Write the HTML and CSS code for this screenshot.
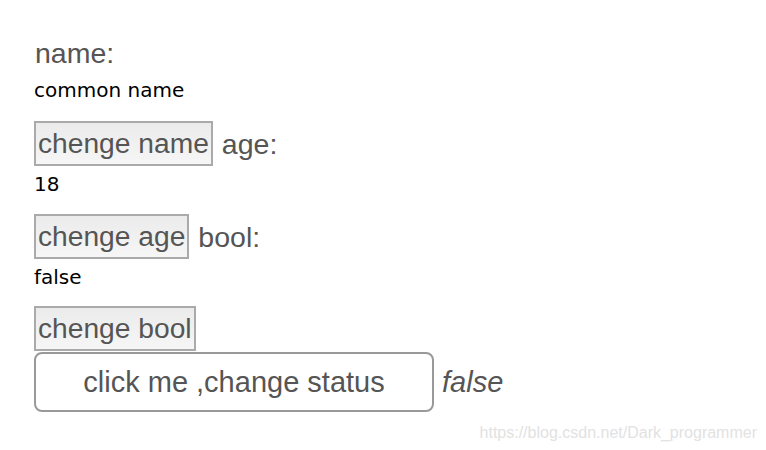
FILE: index.html
```html
<!DOCTYPE html>
<html>
<head>
<meta charset="utf-8">
<link rel="stylesheet" href="styles.css">
</head>
<body>
<div class="app">
  <div class="label">name:</div>
  <div class="value value-first">common name</div>
  <div class="row"><button class="btn">chenge name</button> <span class="label">age:</span></div>
  <div class="value">18</div>
  <div class="row"><button class="btn">chenge age</button> <span class="label">bool:</span></div>
  <div class="value value-last">false</div>
  <div class="row"><button class="btn">chenge bool</button></div>
  <div class="status-row">
    <button class="big-btn">click me ,change status</button>
    <em class="status">false</em>
  </div>
</div>
<div class="watermark">https://blog.csdn.net/Dark_programmer</div>
</body>
</html>
```
FILE: styles.css
```css
html, body {
  margin: 0;
  padding: 0;
  background: #fff;
}
body {
  width: 766px;
  height: 450px;
  position: relative;
  overflow: hidden;
  font-family: "Liberation Sans", Arial, sans-serif;
}
.app {
  padding: 37px 0 0 34px;
}
.label {
  font-size: 28.5px;
  color: #555;
  line-height: 32px;
}
.app > .label {
  padding-left: 1px;
}
.value {
  font-family: "DejaVu Sans", sans-serif;
  font-size: 20px;
  color: #000;
  line-height: 24px;
  margin: 6px 0 18px 0;
}
.value-first {
  margin: 9px 0 19px 0;
}
.value-last {
  margin-bottom: 17px;
}
.row {
  display: flex;
  align-items: center;
  gap: 9px;
  height: 45px;
}
.btn {
  font-family: "Liberation Sans", Arial, sans-serif;
  font-size: 28.2px;
  color: #555;
  background: linear-gradient(#ebebeb, #f6f6f6);
  border: 2px solid #aaa;
  border-radius: 0;
  padding: 4px 2px;
  line-height: 33px;
  height: 45px;
  margin: 0;
}
.status-row {
  display: flex;
  align-items: center;
  gap: 9px;
  margin-top: 1px;
}
.big-btn {
  width: 400px;
  height: 60px;
  font-family: "Liberation Sans", Arial, sans-serif;
  font-size: 29px;
  color: #555;
  background: #fff;
  border: 2px solid #999;
  border-radius: 8px;
  margin: 0;
  padding: 0;
}
.status {
  font-size: 29px;
  color: #555;
  margin-left: -1px;
}
.watermark {
  position: absolute;
  right: 9px;
  top: 424px;
  font-size: 16px;
  color: #e2e2e2;
}
```
